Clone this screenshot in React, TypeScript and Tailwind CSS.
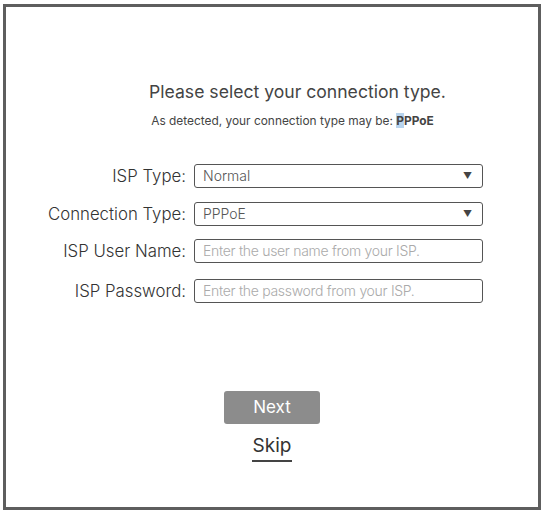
const font = { fontFamily: "Inter, 'Liberation Sans', sans-serif" };

function SelectBox({ value }: { value: string }) {
  return (
    <div className="w-[289px] h-[24px] border border-[#555] rounded-[3px] flex items-center justify-between pl-[8px] pr-[10px]">
      <span className="text-[14px] text-[#555] font-light">{value}</span>
      <span className="text-[9px] text-[#444]">▼</span>
    </div>
  );
}

function TextBox({ placeholder }: { placeholder: string }) {
  return (
    <div className="w-[289px] h-[24px] border border-[#555] rounded-[3px] flex items-center pl-[8px]">
      <span className="text-[14px] text-[#aaa] font-light tracking-[-0.3px]">{placeholder}</span>
    </div>
  );
}

function Row({ label, children }: { label: string; children: React.ReactNode }) {
  return (
    <div className="flex items-center gap-[8px]">
      <div className="w-[180px] text-right text-[16.8px] leading-[24px] text-[#333] font-light">{label}</div>
      {children}
    </div>
  );
}

export default function App() {
  return (
    <div className="w-[544px] h-[515px] bg-white pt-[4px] pl-[3px]" style={font}>
      <div className="w-[538px] h-[506px] border-[3px] border-[#5e5e5e] flex flex-col">
        {/* header */}
        <div className="text-center mt-[73px]">
          <h1 className="pl-[51px] text-[17.6px] text-[#444] leading-[24px]">Please select your connection type.</h1>
          <p className="pl-[41px] text-[11.9px] text-[#444] mt-[8px]">
            As detected, your connection type may be:{" "}
            <span className="font-bold"><span className="bg-[#b8d4ee]">P</span>PPoE</span>
          </p>
        </div>

        {/* form */}
        <div className="flex flex-col mt-[34px]">
          <Row label="ISP Type:">
            <SelectBox value="Normal" />
          </Row>
          <div className="mt-[14px]">
            <Row label="Connection Type:">
              <SelectBox value="PPPoE" />
            </Row>
          </div>
          <div className="mt-[13px]">
            <Row label="ISP User Name:">
              <TextBox placeholder="Enter the user name from your ISP." />
            </Row>
          </div>
          <div className="mt-[16px]">
            <Row label="ISP Password:">
              <TextBox placeholder="Enter the password from your ISP." />
            </Row>
          </div>
        </div>

        {/* actions */}
        <div className="flex flex-col items-center mt-[88px]">
          <button className="w-[96px] h-[33px] bg-[#8c8c8c] rounded-[3px] text-white text-[17px]">Next</button>
          <a className="mt-[10px] text-[19px] text-[#333] border-b-2 border-[#444] leading-[24px] pb-[2px] px-[1px]">Skip</a>
        </div>
      </div>
    </div>
  );
}
